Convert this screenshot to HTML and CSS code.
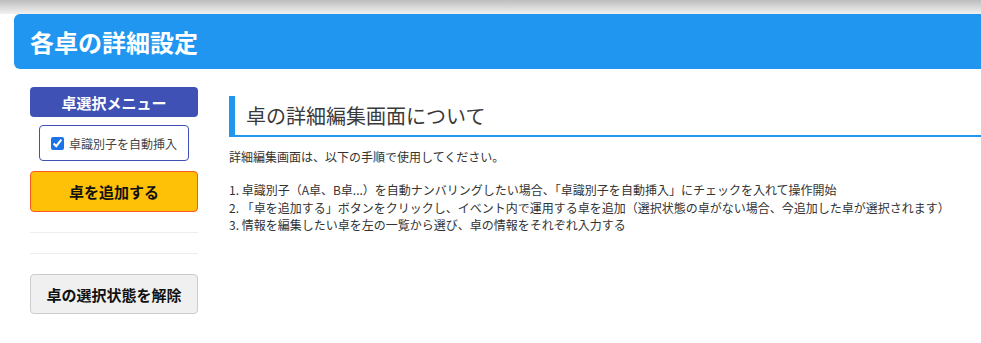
FILE: index.html
```html
<!DOCTYPE html>
<html>
	<head>
		<meta charset="UTF-8">
		<title>各卓の詳細設定</title>
		<link rel="stylesheet" href="styles.css">
	</head>
	<body>
		<div class="topshade"></div>
		<header class="pagehead">
			<h1>各卓の詳細設定</h1>
		</header>

		<div class="layout">
			<aside class="side">
				<div class="side-title">卓選択メニュー</div>
				<label class="autoname">
					<input type="checkbox" checked>
					<span>卓識別子を自動挿入</span>
				</label>
				<button class="btn btn-add">卓を追加する</button>
				<hr class="sep">
				<hr class="sep">
				<button class="btn btn-clear">卓の選択状態を解除</button>
			</aside>

			<main class="content">
				<h2 class="section-title">卓の詳細編集画面について</h2>
				<p class="lead">詳細編集画面は、以下の手順で使用してください。</p>
				<div class="steps">
					<div>1. 卓識別子（A卓、B卓...）を自動ナンバリングしたい場合、「卓識別子を自動挿入」にチェックを入れて操作開始</div>
					<div>2. 「卓を追加する」ボタンをクリックし、イベント内で運用する卓を追加（選択状態の卓がない場合、今追加した卓が選択されます）</div>
					<div>3. 情報を編集したい卓を左の一覧から選び、卓の情報をそれぞれ入力する</div>
				</div>
			</main>
		</div>
	</body>
</html>
```

FILE: styles.css
```css
body {
    margin: 0;
    background: #ffffff;
    font-family: "Noto Sans CJK JP", "Noto Sans", sans-serif;
    color: #333;
    overflow: hidden;
}

.topshade {
    height: 14px;
    background: linear-gradient(#bdbdbd, #f2f2f2);
}

.pagehead {
    margin-left: 14px;
    height: 55px;
    background-color: #2196f0;
    border-radius: 6px 0 0 6px;
    display: flex; align-items: center;
    padding-left: 16px;
}

.pagehead h1 {
    margin: 0;
    font-size: 24px;
    line-height: 1;
    font-weight: bold;
    color: #ffffff;
}

.layout {
    display: flex;
    gap: 31px;
    padding: 18px 0 0 30px;
}

.side {
    width: 168px;
    flex: none;
    display: flex; flex-direction: column;
}

.side-title {
    height: 30px;
    background-color: #3f51b5;
    border-radius: 4px;
    color: #ffffff;
    font-size: 15px;
    font-weight: bold;
    display: flex; align-items: center; justify-content: center;
}

.autoname {
    margin: 8px 9px 0 9px;
    height: 36px;
    box-sizing: border-box;
    border: 1px solid #3f51b5;
    border-radius: 4px;
    display: flex; align-items: center;
    padding-left: 11px;
    font-size: 12px;
    color: #444;
}

.autoname input {
    width: 13px; height: 13px;
    margin: 0 5px 0 0;
    accent-color: #1a73e8;
}

.btn {
    font-family: inherit;
    font-size: 15px;
    font-weight: bold;
    color: #111;
    border-radius: 4px;
    height: 40px;
    padding: 0;
    cursor: pointer;
}

.btn-add {
    margin-top: 10px;
    height: 41px;
    background-color: #ffc107;
    border: 1px solid #ff5722;
}

.sep {
    border: 0;
    border-top: 1px solid #eeeeee;
    margin: 20px 0 0 0;
}

.btn-clear {
    margin-top: 20px;
    background-color: #f0f0f0;
    border: 1px solid #cccccc;
}

.content {
    flex: 1;
    padding-top: 9px;
}

.section-title {
    margin: 0;
    height: 41px;
    box-sizing: border-box;
    border-left: 6px solid #2196f0;
    border-bottom: 2px solid #2196f0;
    padding-left: 11px;
    font-size: 20px;
    font-weight: normal;
    color: #3a3a3a;
    display: flex; align-items: center;
}

.lead {
    margin: 11px 0 0 0;
    font-size: 12px;
    line-height: 18px;
}

.steps {
    margin-top: 15px;
    font-size: 12px;
    line-height: 17.5px;
    white-space: nowrap;
}
```
